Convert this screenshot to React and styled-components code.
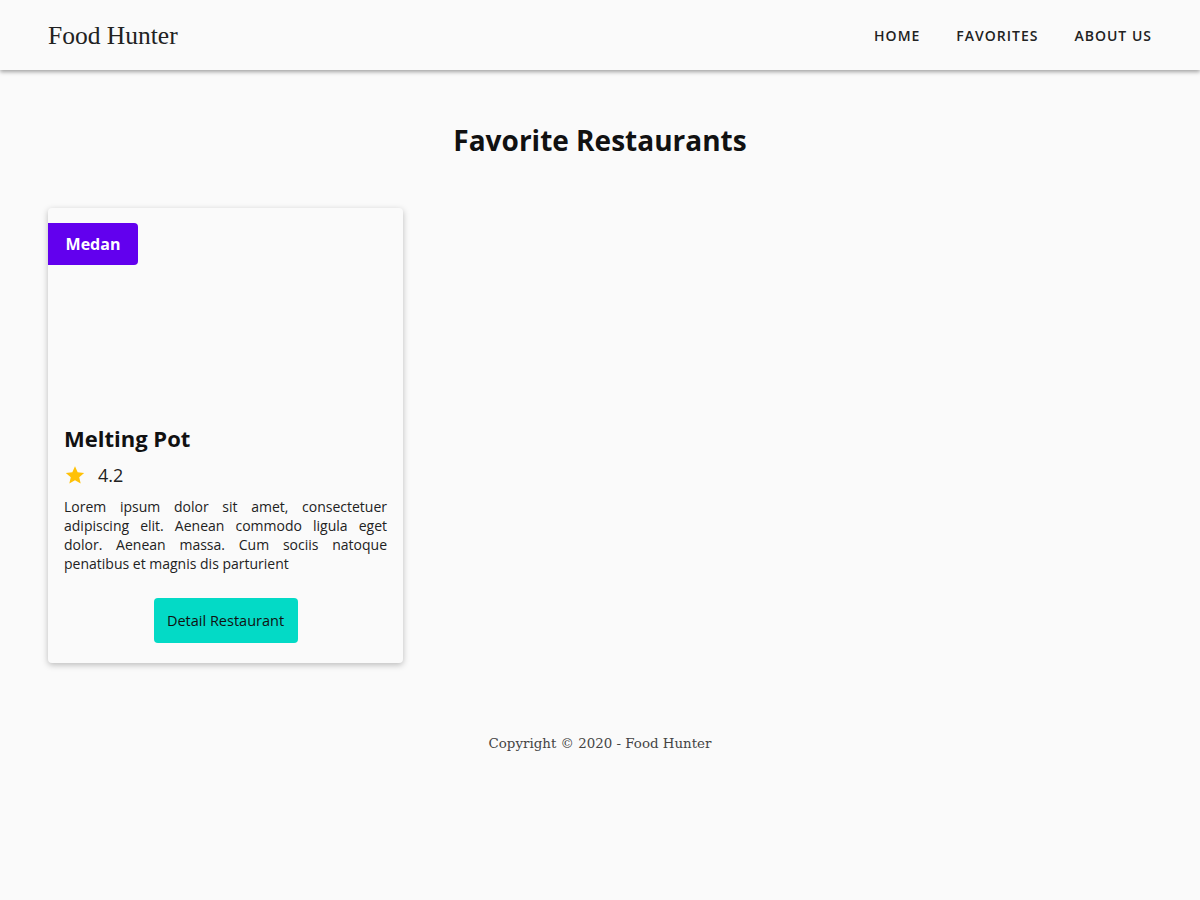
import React from 'react';
import styled, { createGlobalStyle } from 'styled-components';

const restaurants = [
    {
        id: 1,
        name: 'Melting Pot',
        city: 'Medan',
        rating: 4.2,
        description: 'Lorem ipsum dolor sit amet, consectetuer adipiscing elit. Aenean commodo ligula eget dolor. Aenean massa. Cum sociis natoque penatibus et magnis dis parturient',
    },
];

const GlobalStyle = createGlobalStyle`
    * { box-sizing: border-box; }
    body {
        margin: 0;
        background: #fafafa;
        font-family: 'Open Sans', sans-serif;
        color: #111;
    }
`

const App = () => {
    return (
        <>
            <GlobalStyle />
            <Header>
                <Logo>Food Hunter</Logo>
                <Nav>
                    <NavLink href="#">Home</NavLink>
                    <NavLink href="#">Favorites</NavLink>
                    <NavLink href="#">About Us</NavLink>
                </Nav>
            </Header>
            <Main>
                <Title>Favorite Restaurants</Title>
                <CardGrid>
                    {
                        restaurants.map(item => (
                            <Card key={item.id}>
                                <Badge>{item.city}</Badge>
                                <Picture />
                                <CardBody>
                                    <CardTitle>{item.name}</CardTitle>
                                    <Rating>
                                        <svg width="22" height="22" viewBox="0 0 24 24">
                                            <path fill="#ffc107" d="M12 2.5l2.9 6.6 7.1.6-5.4 4.7 1.6 7-6.2-3.7-6.2 3.7 1.6-7L2 9.7l7.1-.6z" />
                                        </svg>
                                        <span>{item.rating}</span>
                                    </Rating>
                                    <Description>{item.description}</Description>
                                    <ButtonRow>
                                        <DetailButton>Detail Restaurant</DetailButton>
                                    </ButtonRow>
                                </CardBody>
                            </Card>
                        ))
                    }
                </CardGrid>
            </Main>
            <Footer>Copyright © 2020 - Food Hunter</Footer>
        </>
    )
}

export default App;

const Header = styled.header`
    height: 70px;
    display: flex;
    align-items: center;
    justify-content: space-between;
    padding: 0 48px;
    background: #fafafa;
    box-shadow: 0 2px 4px rgba(0, 0, 0, 0.35);
    position: relative;
`
const Logo = styled.div`
    font-family: 'Liberation Serif', serif;
    font-size: 25.5px;
    color: #222;
    margin-top: 1px;
`
const Nav = styled.nav`
    display: flex;
    gap: 36px;
`
const NavLink = styled.a`
    text-decoration: none;
    text-transform: uppercase;
    color: #222;
    font-size: 14px;
    font-weight: 600;
    letter-spacing: 1px;
`
const Main = styled.main`
    padding: 0 48px;
`
const Title = styled.h2`
    margin: 51px 0 49px;
    text-align: center;
    font-size: 28px;
    line-height: 38px;
    font-weight: 700;
`
const CardGrid = styled.div`
    display: grid;
    grid-template-columns: repeat(3, 355px);
    gap: 32px;
`
const Card = styled.article`
    position: relative;
    background: #fafafa;
    border-radius: 4px;
    box-shadow: 0 2px 6px rgba(0, 0, 0, 0.25);
    overflow: hidden;
`
const Badge = styled.span`
    position: absolute;
    top: 15px;
    left: 0;
    width: 90px;
    height: 42px;
    display: flex;
    align-items: center;
    justify-content: center;
    background: #6200ee;
    color: #fff;
    font-weight: 700;
    font-size: 16px;
    border-radius: 0 4px 4px 0;
`
const Picture = styled.div`
    height: 200px;
`
const CardBody = styled.div`
    padding: 15px 16px 20px;
`
const CardTitle = styled.h3`
    margin: 0;
    font-size: 22px;
    line-height: 30px;
    font-weight: 700;
`
const Rating = styled.div`
    margin-top: 9px;
    display: flex;
    align-items: center;
    gap: 12px;
    height: 26px;
    font-size: 18px;
    color: #222;
`
const Description = styled.p`
    margin: 9px 0 0;
    font-size: 14px;
    line-height: 19px;
    text-align: justify;
    color: #222;
`
const ButtonRow = styled.div`
    display: flex;
    justify-content: center;
    margin-top: 25px;
`
const DetailButton = styled.button`
    background: #03dac6;
    color: #111;
    border: none;
    border-radius: 4px;
    width: 144px;
    height: 45px;
    font-family: 'Open Sans', sans-serif;
    font-size: 14.5px;
    cursor: pointer;
`
const Footer = styled.footer`
    margin-top: 71px;
    text-align: center;
    font-family: 'DejaVu Serif', serif;
    font-size: 13.4px;
    line-height: 20px;
    color: #444;
`
